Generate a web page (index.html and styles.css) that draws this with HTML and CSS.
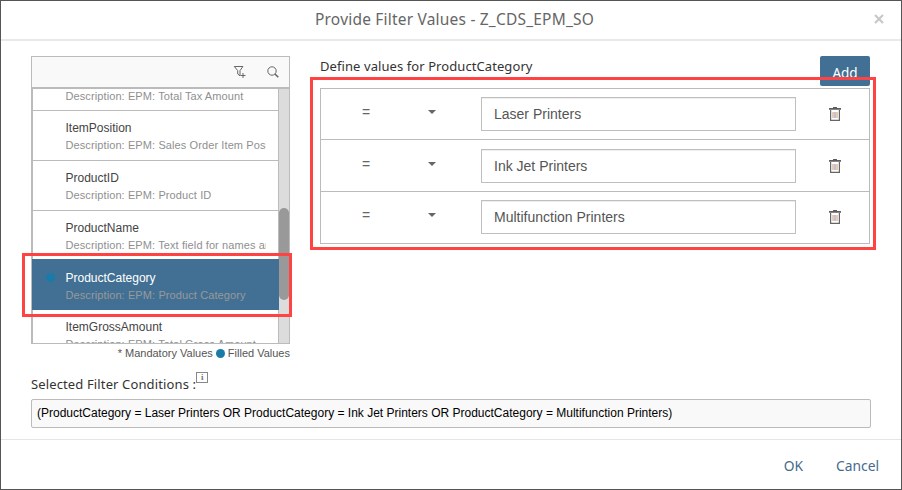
FILE: index.html
```html
<!DOCTYPE html>
<html lang="en">
<head>
<meta charset="utf-8">
<title>Provide Filter Values</title>
<link rel="stylesheet" href="styles.css">
</head>
<body>
<svg width="0" height="0" class="defs">
  <symbol id="trash" viewBox="0 0 14 16">
    <path d="M1 2h12v1.8H1zM5 1h4v1H5z" fill="#5e5e5e"/>
    <path d="M2.6 4v10.4h8.8V4" fill="none" stroke="#666" stroke-width="1.2"/>
    <path d="M5 6v6M9 6v6" stroke="#c99874"/>
    <path d="M7 6v6" stroke="#8b83a0"/>
  </symbol>
</svg>
<div class="dialog">
  <header class="header">
    <h1 class="title"><span>Provide Filter Values - Z_CDS_EPM_SO</span></h1>
    <button class="close" aria-label="Close"><svg width="10" height="10" viewBox="0 0 10 10"><path d="M1 1l8 8M9 1L1 9" stroke="#c8c8c8" stroke-width="2.2"/></svg></button>
  </header>
  <main class="body">
    <div class="columns">
      <section class="fields">
        <div class="toolbar">
          <svg width="14" height="14" viewBox="0 0 14 14" fill="none" stroke="#666"><path d="M1.3 1.5h8.6L7 5.6v5.2L4.7 9V5.6zM10 8v5M7.5 10.5h5"/></svg>
          <svg width="12" height="12" viewBox="0 0 12 12" fill="none" stroke="#666"><circle cx="5" cy="5" r="4.2"/><path d="M8 8l3.3 3.3" stroke-width="1.6"/></svg>
        </div>
        <div class="list">
          <ul class="items">
            <li class="item first"><span class="desc">Description: EPM: Total Tax Amount</span></li>
            <li class="item"><span class="name">ItemPosition</span><span class="desc">Description: EPM: Sales Order Item Position</span></li>
            <li class="item"><span class="name">ProductID</span><span class="desc">Description: EPM: Product ID</span></li>
            <li class="item short"><span class="name">ProductName</span><span class="desc">Description: EPM: Text field for names and</span></li>
            <li class="item selected"><i class="dot"></i><span class="name">ProductCategory</span><span class="desc">Description: EPM: Product Category</span></li>
            <li class="item last"><span class="name">ItemGrossAmount</span><span class="desc">Description: EPM: Total Gross Amount</span></li>
          </ul>
          <div class="track"><div class="thumb"></div></div>
        </div>
        <p class="legend"><span>* Mandatory Values</span><i class="dot"></i><span>Filled Values</span></p>
      </section>
      <section class="values">
        <div class="values-head"><h2 class="label">Define values for ProductCategory</h2><button class="add">Add</button></div>
        <div class="rows">
          <div class="row"><span class="op">=</span><i class="caret"></i><div class="input">Laser Printers</div><svg class="trash" width="14" height="16"><use href="#trash"/></svg></div>
          <div class="row tall"><span class="op">=</span><i class="caret"></i><div class="input">Ink Jet Printers</div><svg class="trash" width="14" height="16"><use href="#trash"/></svg></div>
          <div class="row"><span class="op">=</span><i class="caret"></i><div class="input">Multifunction Printers</div><svg class="trash" width="14" height="16"><use href="#trash"/></svg></div>
        </div>
      </section>
    </div>
    <div class="conditions"><span class="label">Selected Filter Conditions :</span><span class="info">i</span></div>
    <div class="expression"><span>(ProductCategory = Laser Printers OR ProductCategory = Ink Jet Printers OR ProductCategory = Multifunction Printers)</span></div>
  </main>
  <footer class="footer"><button>OK</button><button>Cancel</button></footer>
  <div class="mark mark-values"></div>
  <div class="mark mark-field"></div>
</div>
</body>
</html>
```

FILE: styles.css
```css
* { box-sizing: border-box; margin: 0; padding: 0; }
body { width: 902px; height: 490px; overflow: hidden; font-family: "Liberation Sans", Arial, sans-serif; background: #fff; }
button { border: 0; background: none; font: inherit; }
ul { list-style: none; }
.defs { position: absolute; }
.dialog { position: relative; width: 902px; height: 490px; border: 1px solid #555; display: flex; flex-direction: column; }
.header { height: 40px; border-bottom: 2px solid #e9e9e9; display: flex; align-items: center; padding: 0 17px 3px 314px; }
.title { flex: 1; font: 400 15.5px/20px "Noto Sans", sans-serif; letter-spacing: .2px; color: #666; white-space: nowrap; padding-top: 1px; }
.close { display: flex; }
.body { height: 398px; padding: 15px 30px 0; }
.columns { display: flex; gap: 30px; height: 307px; }
.fields { width: 259px; }
.toolbar { height: 33px; border: 1px solid #bbb; border-bottom-width: 2px; background: #f9f9f9; display: flex; align-items: center; justify-content: flex-end; gap: 20px; padding-right: 10px; }
.list { height: 255px; display: flex; border: 1px solid #bbb; border-top: 0; }
.items { width: 247px; height: 254px; overflow: hidden; }
.item { position: relative; height: 50px; padding: 9px 12px 0 32.5px; border: 1px solid #bbb; border-top: 0; display: flex; flex-direction: column; }
.item.first { height: 22px; padding-top: 0; }
.item.short { height: 48px; border-bottom: 0; }
.item.selected { height: 51px; background: #427094; border-color: #427094; padding-top: 11px; }
.item.last { padding-top: 9px; border-bottom: 0; }
.name { font-size: 12px; line-height: 17px; color: #444; }
.desc { font-size: 11px; line-height: 17px; color: #8f8f8f; white-space: nowrap; overflow: hidden; letter-spacing: .1px; flex: none; }
.first .desc { line-height: 15px; }
.selected .name { color: #fff; }
.selected .desc { color: #999; }
.dot { width: 9px; height: 9px; border-radius: 50%; background: #1b7ba8; }
.item .dot { position: absolute; left: 13px; top: 14px; }
.track { width: 10px; background: #dcdcdc; padding-top: 119px; }
.thumb { height: 92px; border-radius: 5px; background: #999; }
.legend { display: flex; justify-content: flex-end; align-items: center; gap: 3px; height: 18px; font-size: 11px; color: #555; white-space: nowrap; }
.values { width: 550px; }
.values-head { display: flex; justify-content: space-between; height: 32px; }
.label { font: 400 13px/21px "Noto Sans", sans-serif; letter-spacing: .08px; color: #333; white-space: nowrap; }
.add { width: 50px; height: 30px; border-radius: 2px; background: #427094; color: #fff; font: 400 13.5px/20px "Noto Sans", sans-serif; padding-top: 4px; }
.rows { border: 1px solid #bbb; border-bottom: 0; }
.row { height: 51px; border-bottom: 1px solid #bbb; display: flex; align-items: flex-start; padding-top: 8px; }
.row.tall { height: 52px; padding-top: 9px; }
.row:last-child { height: 52px; }
.op { width: 70px; margin-left: 41px; font-size: 14px; line-height: 30px; color: #666; }
.caret { width: 0; height: 0; margin: 13px 45px 0 -4px; border: 4px solid transparent; border-top-color: #666; border-bottom: 0; }
.input { width: 315px; height: 34px; border: 1px solid #bfbfbf; font-size: 14px; line-height: 32px; padding-left: 12px; color: #555; box-shadow: inset 0 1px #eee; }
.trash { margin: 9px 0 0 32px; }
.conditions { display: flex; align-items: flex-start; height: 27px; margin-top: 9px; }
.conditions .label { line-height: 24px; letter-spacing: .13px; }
.info { width: 12px; height: 11px; border: 1px solid #888; font: 700 9px/9px "Liberation Serif", serif; text-align: center; color: #777; }
.expression { width: 840px; height: 29px; border: 1px solid #bbb; border-radius: 2px; background: #f9f9f9; padding-left: 5px; font-size: 12px; line-height: 26px; color: #000; white-space: nowrap; }
.footer { flex: 1; border-top: 1px solid #e5e5e5; display: flex; justify-content: flex-end; align-items: center; gap: 33px; padding: 3px 22px 0 0; font: 400 13.8px/20px "Noto Sans", sans-serif; }
.footer button { color: #466a8c; }
.mark { position: absolute; border: 3px solid #ff4343; }
.mark-values { left: 309px; top: 76px; width: 566px; height: 173px; }
.mark-field { left: 21px; top: 252px; width: 270px; height: 64px; }
```
